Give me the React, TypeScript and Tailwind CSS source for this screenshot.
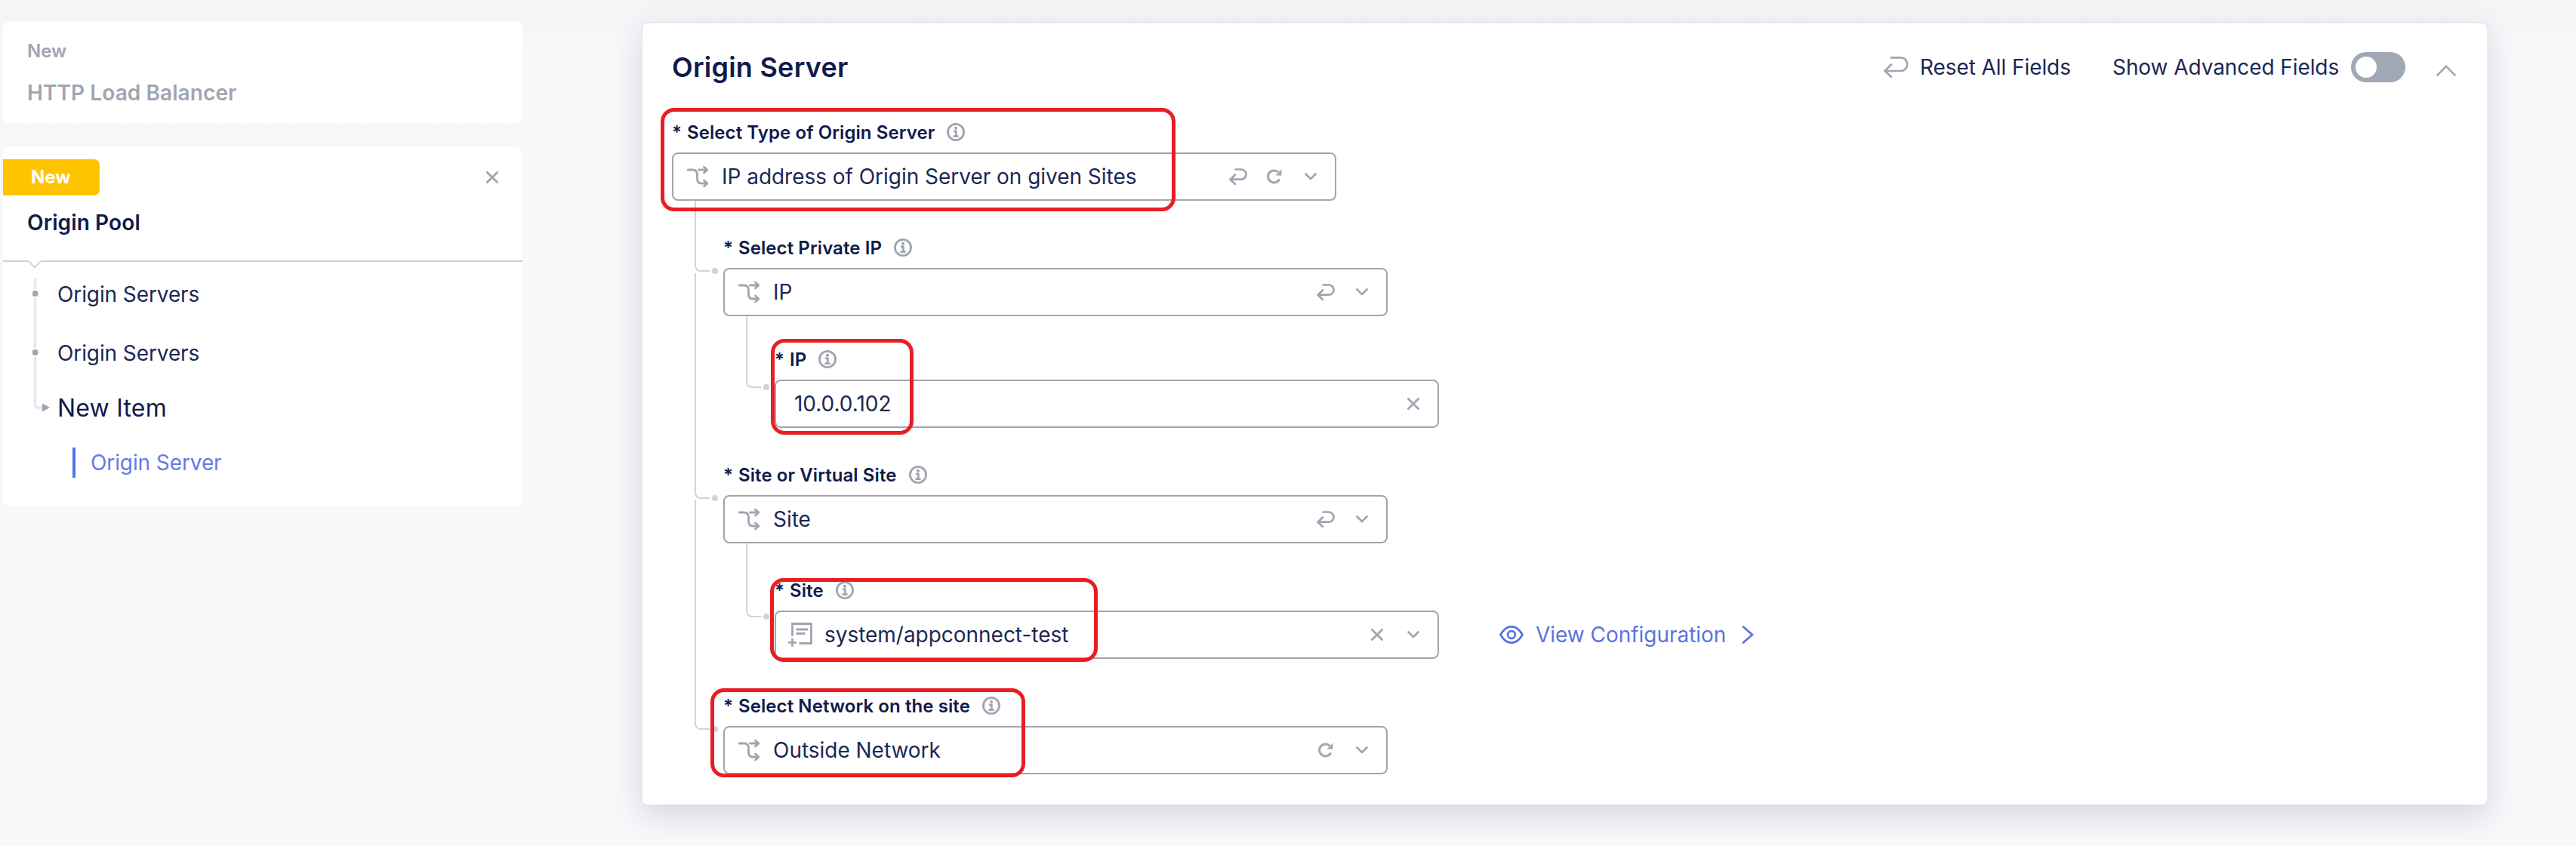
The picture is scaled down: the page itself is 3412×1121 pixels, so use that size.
import type { ReactNode } from "react";

type IconProps = { className?: string };

const grey = "text-[#a0a5b1]";

function Info() {
  return (
    <svg viewBox="0 0 24 24" className={`h-6 w-6 shrink-0 ${grey}`} fill="none" stroke="currentColor">
      <circle cx="12" cy="12" r="10.600" strokeWidth="2.800" />
      <circle cx="12" cy="6.800" r="2.100" fill="currentColor" stroke="none" />
      <path d="M9 10.900h3.400v6.800M8.400 17.700h7.200" strokeWidth="2.700" />
    </svg>
  );
}

function Branch() {
  return (
    <svg viewBox="0 0 28 28" className={`h-7 w-7 ${grey}`} fill="none" stroke="currentColor" strokeWidth="2.800" strokeLinecap="round" strokeLinejoin="round">
      <path d="M1 5h6q6.500 0 6.500 6.500V17q0 6 6 6H27" />
      <path d="M15.500 5H27M22.500 1.200L27 5l-4.500 4M22.500 19L27 23l-4.500 4" />
    </svg>
  );
}

function ListPlus() {
  return (
    <svg viewBox="0 0 32 32" className={`-ml-0.5 h-8 w-8 ${grey}`} fill="none" stroke="currentColor" strokeWidth="2.800">
      <path d="M5.500 18V1.500h25v26H14.500" />
      <path d="M10.500 9H26M10.500 14.500h12M0 26.300h11M5.500 21v10.800" />
    </svg>
  );
}

function Reset({ className = "h-[22px] w-6" }: IconProps) {
  return (
    <svg viewBox="0 0 24 22" className={`${className} ${grey}`} fill="none" stroke="currentColor" strokeWidth="2.700" strokeLinecap="round" strokeLinejoin="round">
      <path d="M8.500 1.500H16a6.600 6.600 0 0 1 0 13.200H1.500M8 8.500l-6.500 6.200L8 21" />
    </svg>
  );
}

function ResetLarge() {
  return (
    <svg viewBox="0 0 33 28" className={`h-7 w-[33px] ${grey}`} fill="none" stroke="currentColor" strokeWidth="2.700" strokeLinecap="round" strokeLinejoin="round">
      <path d="M10 1.400H22.500a8.800 8.800 0 0 1 0 17.600H1.500M10 10.500L1.500 19l8.500 8" />
    </svg>
  );
}

function Refresh() {
  return (
    <svg viewBox="0 0 20 20" className={`h-5 w-5 ${grey}`} fill="none" stroke="currentColor" strokeWidth="3">
      <path d="M16.700 13.500A8 8 0 1 1 15.300 4.300" />
      <path d="M19.500 0.500v8h-8z" fill="currentColor" stroke="none" />
    </svg>
  );
}

function Down() {
  return (
    <svg viewBox="0 0 16 10" className={`h-[10px] w-4 ${grey}`} fill="none" stroke="currentColor" strokeWidth="2.700" strokeLinecap="round" strokeLinejoin="round">
      <path d="M1.500 1.500L8 8l6.500-6.500" />
    </svg>
  );
}

function Cross() {
  return (
    <svg viewBox="0 0 16 16" className={`h-4 w-4 ${grey}`} fill="none" stroke="currentColor" strokeWidth="2.800" strokeLinecap="round">
      <path d="M1.400 1.400l13.200 13.200M14.600 1.400L1.400 14.600" />
    </svg>
  );
}

function Slot({ children }: { children: ReactNode }) {
  return <div className="flex w-12 items-center justify-center">{children}</div>;
}

function Field({ label, icon, value, actions, children }: { label: string; icon?: ReactNode; value: string; actions: ReactNode; children?: ReactNode }) {
  return (
    <div className="relative w-[880px]">
      <div className="flex h-[42px] items-start">
        <span className="pt-px text-[24px] leading-[30px] font-semibold tracking-[0.08px] whitespace-pre">
          <span className="mr-[7px]">*</span>{label}
        </span>
        <div className="mt-[3px] ml-4">
          <Info />
        </div>
      </div>
      <div className="flex h-16 items-center rounded-[8px] border-2 border-[#a0a5b1] pr-[8px]">
        {icon ? <div className="ml-[18px] w-[46px]">{icon}</div> : <div className="w-[24px]" />}
        <span className="flex-1 text-[28px] leading-[34px] font-normal tracking-[-0.03px] whitespace-nowrap text-[#1c2853]">{value}</span>
        {actions}
      </div>
      {children}
    </div>
  );
}

/* Elbow line from a parent field down to its dependent field. */
function Elbow({ box }: { box: string }) {
  return (
    <div className={`absolute w-5 rounded-bl-[8px] border-b-2 border-l-2 border-[#cfd3dc] ${box}`}>
      <span className="absolute -right-[11px] -bottom-[5px] h-2 w-2 rounded-full bg-[#cfd3dc]" />
    </div>
  );
}

function Mark({ box }: { box: string }) {
  return <div className={`absolute rounded-[18px] border-[5px] border-[#e81e25] ${box}`} />;
}

export default function App() {
  return (
    <div className="flex h-[1121px] w-[3412px] items-start overflow-hidden bg-linear-to-b from-[#f3f4f6] to-[#f7f8fa] to-[60px] pt-[29px] pl-1 font-['Inter',sans-serif] text-[#0f1b4c]">
      <aside className="flex w-[688px] flex-col gap-8">
        <div className="h-[134px] rounded-[8px] bg-white pt-[24px] pl-[32px] font-semibold text-[#a0a5b1]">
          <div className="text-[24px] leading-[30px]">New</div>
          <div className="mt-[23px] text-[28px] leading-[34px] tracking-[0.08px]">HTTP Load Balancer</div>
        </div>
        <div className="h-[476px] rounded-[8px] bg-white">
          <div className="flex items-center justify-between pt-4 pr-8">
            <div className="flex h-12 w-32 items-center rounded-r-[8px] bg-[#ffc400] pl-[37px] text-[24px] font-bold text-white">New</div>
            <Cross />
          </div>
          <div className="mt-[19px] pl-[32px] text-[28px] leading-[34px] font-semibold tracking-[0.12px]">Origin Pool</div>
          <div className="relative mt-[33px] h-[2px] bg-[#cfd0d8]">
            <svg viewBox="0 0 18 11" className="absolute top-0 left-[33px] h-[11px] w-[18px]">
              <path d="M0 0h18v2L9 10 0 2z" fill="white" />
              <path d="M0.500 1L9 9.500 17.500 1" fill="none" stroke="#cfd0d8" strokeWidth="1.800" />
            </svg>
          </div>
          <div className="flex pt-[22px] pl-[39px]">
            <svg viewBox="0 0 24 180" className="h-[180px] w-6" fill="none">
              <path d="M3.500 0V167q0 4 4 4H13" stroke="#e4e7f1" strokeWidth="3.400" />
              <circle cx="3.500" cy="20" r="6" fill="white" />
              <circle cx="3.500" cy="98" r="6" fill="white" />
              <circle cx="3.500" cy="20" r="4" fill="#a0a5b1" />
              <circle cx="3.500" cy="98" r="4" fill="#a0a5b1" />
              <path d="M13 165.500v11l10-5.500z" fill="#a0a5b1" />
            </svg>
            <div className="flex flex-col pt-[4px] pl-[9px] font-normal">
              <span className="text-[28px] leading-[34px] tracking-[-0.1px] text-[#1c2853]">Origin Servers</span>
              <span className="mt-[44px] text-[28px] leading-[34px] tracking-[-0.1px] text-[#1c2853]">Origin Servers</span>
              <span className="mt-[37px] text-[32px] leading-[38px] tracking-[0.2px]">New Item</span>
              <span className="mt-[33px] ml-5 flex h-10 items-center border-l-4 border-[#4f73ee] pl-5 text-[28px] tracking-[-0.1px] text-[#647be2]">Origin Server</span>
            </div>
          </div>
        </div>
      </aside>

      <main className="relative ml-[157px] h-[1037px] w-[2447px] rounded-[8px] border-2 border-b-0 border-[#e7e9f1] bg-white pl-[39px] shadow-[0_14px_40px_rgba(15,27,76,0.15)]">
        <header className="flex h-[116px] items-center">
          <h1 className="text-[36px] leading-[44px] font-semibold tracking-[0.24px]">Origin Server</h1>
          <div className="ml-auto flex items-center pr-[41px] text-[28px] leading-[34px] font-normal tracking-[-0.08px] text-[#1c2853]">
            <ResetLarge />
            <span className="ml-[15px] w-[203px] whitespace-nowrap">Reset All Fields</span>
            <span className="ml-[52px] w-[299px] whitespace-nowrap">Show Advanced Fields</span>
            <div className="ml-[17px] flex h-10 w-[72px] items-center rounded-full bg-[#a0a8b8] pl-[6px]">
              <div className="h-7 w-7 rounded-full bg-white" />
            </div>
            <svg viewBox="0 0 26 15" className={`mt-2 ml-[41px] h-[15px] w-[26px] ${grey}`} fill="none" stroke="currentColor" strokeWidth="2.500" strokeLinecap="round">
              <path d="M1.500 13.500L13 1.800l11.500 11.700" />
            </svg>
          </div>
        </header>

        <div className="mt-[13px] flex flex-col">
          <Field label="Select Type of Origin Server" icon={<Branch />} value="IP address of Origin Server on given Sites" actions={<><Slot><Reset /></Slot><Slot><Refresh /></Slot><Slot><Down /></Slot></>}>
            <Elbow box="left-[30px] top-[106px] h-[94px]" />
            <Elbow box="left-[30px] top-[202px] h-[299px]" />
            <Elbow box="left-[30px] top-[503px] h-[304px]" />
          </Field>
          <div className="mt-[47px] ml-[68px]">
            <Field label="Select Private IP" icon={<Branch />} value="IP" actions={<><Slot><Reset /></Slot><Slot><Down /></Slot></>}>
              <Elbow box="left-[30px] top-[106px] h-[95px]" />
            </Field>
          </div>
          <div className="mt-[42px] ml-[136px]">
            <Field label="IP" value="10.0.0.102" actions={<Slot><Cross /></Slot>} />
          </div>
          <div className="mt-[47px] ml-[68px]">
            <Field label="Site or Virtual Site" icon={<Branch />} value="Site" actions={<><Slot><Reset /></Slot><Slot><Down /></Slot></>}>
              <Elbow box="left-[30px] top-[106px] h-[98px]" />
            </Field>
          </div>
          <div className="mt-[47px] ml-[136px] flex items-end">
            <Field label="Site" icon={<ListPlus />} value="system/appconnect-test" actions={<><Slot><Cross /></Slot><Slot><Down /></Slot></>} />
            <a className="ml-[80px] flex h-16 items-center text-[28px] font-normal tracking-[-0.03px] text-[#5b74e0]">
              <svg viewBox="0 0 32 24" className="h-6 w-8" fill="none" stroke="currentColor" strokeWidth="2.800">
                <path d="M1.500 12Q7.500 1.300 16 1.300T30.500 12Q24.500 22.700 16 22.700T1.500 12z" strokeLinejoin="round" />
                <circle cx="16" cy="12" r="4.900" />
              </svg>
              <span className="ml-[16px] w-[253px] whitespace-nowrap">View Configuration</span>
              <svg viewBox="0 0 16 24" className="ml-5 h-6 w-4" fill="none" stroke="currentColor" strokeWidth="2.800" strokeLinecap="round">
                <path d="M2 1.500L14 12 2 22.500" />
              </svg>
            </a>
          </div>
          <div className="mt-[47px] ml-[68px]">
            <Field label="Select Network on the site" icon={<Branch />} value="Outside Network" actions={<><Slot><Refresh /></Slot><Slot><Down /></Slot></>} />
          </div>
        </div>

        <Mark box="left-[24px] top-[112px] h-[137px] w-[682px]" />
        <Mark box="left-[170px] top-[418px] h-[127px] w-[189px]" />
        <Mark box="left-[169px] top-[735px] h-[111px] w-[434px]" />
        <Mark box="left-[90px] top-[881px] h-[118px] w-[417px]" />
      </main>
    </div>
  );
}
